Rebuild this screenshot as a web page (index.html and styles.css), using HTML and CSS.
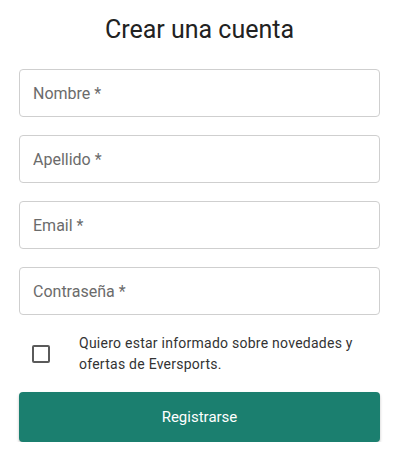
FILE: index.html
```html
<!DOCTYPE html>
<html lang="es">
<head>
    <meta charset="UTF-8">
    <meta name="viewport" content="width=device-width, initial-scale=1.0">
    <title>Crear una cuenta</title>
    <link rel="stylesheet" href="styles.css">
</head>
<body>
    <div id="signup">
        <h1>Crear una cuenta</h1>
        <form class="signup-form">
            <input class="field" type="text" placeholder="Nombre *">
            <input class="field" type="text" placeholder="Apellido *">
            <input class="field" type="email" placeholder="Email *">
            <input class="field" type="password" placeholder="Contraseña *">
            <label class="newsletter">
                <span class="check-wrap"><input type="checkbox" class="check"></span>
                <span class="newsletter-text">Quiero estar informado sobre novedades y ofertas de Eversports.</span>
            </label>
            <button type="button" class="submit">Registrarse</button>
        </form>
    </div>
</body>
</html>
```

FILE: styles.css
```css
body {
    font-family: Roboto, "Liberation Sans", sans-serif;
    background-color: #ffffff;
    color: #222;
    margin: 0;
    padding: 0 21px 0 19px;
}
#signup h1 {
    margin: 14px 0 23px;
    font-size: 25px;
    line-height: 32px;
    font-weight: 400;
    text-align: center;
    color: #222;
}
.signup-form {
    display: flex;
    flex-direction: column;
    gap: 18px;
}
.field {
    box-sizing: border-box;
    height: 48px;
    width: 100%;
    border: 1px solid #cfcfcf;
    border-radius: 4px;
    padding: 0 13px;
    font-family: inherit;
    font-size: 16px;
    color: #222;
    outline: none;
}
.field::placeholder {
    color: #6b6b6b;
}
.newsletter {
    display: flex;
    align-items: center;
}
.check-wrap {
    flex-shrink: 0;
    width: 60px;
    display: flex;
    padding-left: 13px;
    box-sizing: border-box;
}
.check {
    appearance: none;
    margin: 0;
    width: 18px;
    height: 18px;
    border: 2px solid #5a5a5a;
    border-radius: 2px;
    box-sizing: border-box;
}
.newsletter-text {
    font-size: 14px;
    line-height: 21px;
    color: #333;
    letter-spacing: 0.25px;
}
.submit {
    height: 50px;
    margin-top: -1px;
    background-color: #1b7f6f;
    border: none;
    border-radius: 4px;
    color: #fff;
    font-family: inherit;
    font-size: 15px;
    box-shadow: 0 2px 3px rgba(0, 0, 0, 0.25);
    cursor: pointer;
}
```
